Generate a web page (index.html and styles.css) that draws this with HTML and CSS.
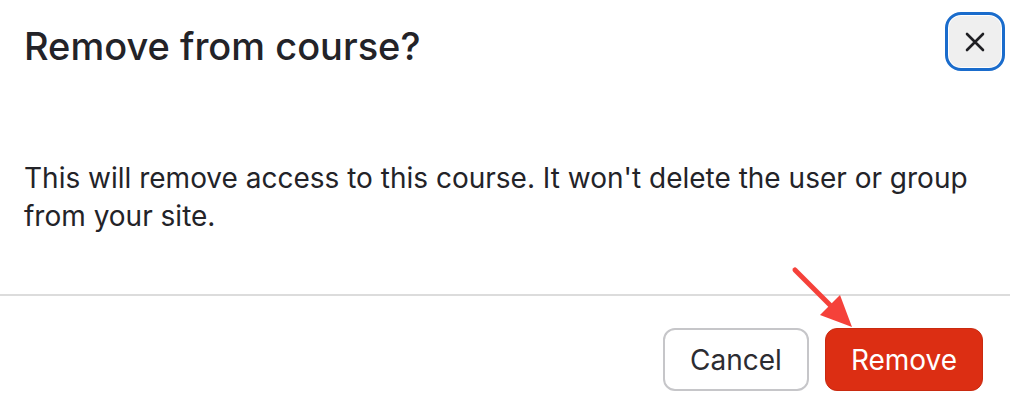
FILE: index.html
```html
<!DOCTYPE html>
<html lang="en">
<head>
<meta charset="utf-8">
<title>Remove from course?</title>
<link rel="stylesheet" href="styles.css">
</head>
<body>
<div class="dialog">
  <div class="header">
    <h1 class="title">Remove from course?</h1>
    <button class="close" aria-label="Close">
      <svg width="24" height="24" viewBox="0 0 24 24"><path d="M4 4L20 20M20 4L4 20" stroke="#1f1f23" stroke-width="2.6" stroke-linecap="round" fill="none"/></svg>
    </button>
  </div>
  <div class="body">
    <p class="text">This will remove access to this course. It won't delete the user or group from your site.</p>
  </div>
  <div class="footer">
    <button class="btn btn-cancel">Cancel</button>
    <button class="btn btn-remove">Remove</button>
  </div>
  <svg class="arrow" width="80" height="80" viewBox="0 0 80 80">
    <line x1="5" y1="8" x2="45" y2="48" stroke="#f5413a" stroke-width="5" stroke-linecap="round"/>
    <polygon points="62,65 30,53 50,33" fill="#f5413a"/>
  </svg>
</div>
</body>
</html>
```
FILE: styles.css
```css
html, body {
  margin: 0;
  padding: 0;
  background: #ffffff;
}
body {
  font-family: Inter, "Liberation Sans", sans-serif;
  color: #232328;
}
.dialog {
  position: relative;
  width: 1010px;
  height: 408px;
  display: flex;
  flex-direction: column;
}
.header {
  display: flex;
  justify-content: space-between;
  align-items: flex-start;
  padding: 12px 5px 0 24px;
}
.title {
  margin: 0;
  font-size: 38px;
  font-weight: 500;
  line-height: 44px;
  padding-top: 12px;
  letter-spacing: 0;
}
.close {
  width: 60px;
  height: 59px;
  box-sizing: border-box;
  border: 3px solid #1a6ccc;
  border-radius: 16px;
  background: #efefef;
  box-shadow: inset 0 0 0 1px #ffffff;
  display: flex;
  align-items: center;
  justify-content: center;
  padding: 0;
  cursor: pointer;
}
.body {
  padding: 88px 22px 0 24px;
  height: 223px;
  box-sizing: border-box;
}
.text {
  margin: 0;
  font-size: 28px;
  line-height: 38px;
}
.footer {
  border-top: 2px solid #dcdcdc;
  display: flex;
  justify-content: flex-end;
  gap: 16px;
  padding: 32px 27px 0 0;
}
.btn {
  height: 63px;
  box-sizing: border-box;
  border-radius: 12px;
  font-family: Inter, "Liberation Sans", sans-serif;
  font-size: 28px;
  padding: 0;
  cursor: pointer;
}
.btn-cancel {
  width: 146px;
  background: #ffffff;
  border: 2px solid #c6c6c9;
  color: #2c2c31;
}
.btn-remove {
  width: 158px;
  background: #dc2e13;
  border: 1px solid #c92a10;
  color: #ffffff;
}
.arrow {
  position: absolute;
  left: 790px;
  top: 262px;
}
```
